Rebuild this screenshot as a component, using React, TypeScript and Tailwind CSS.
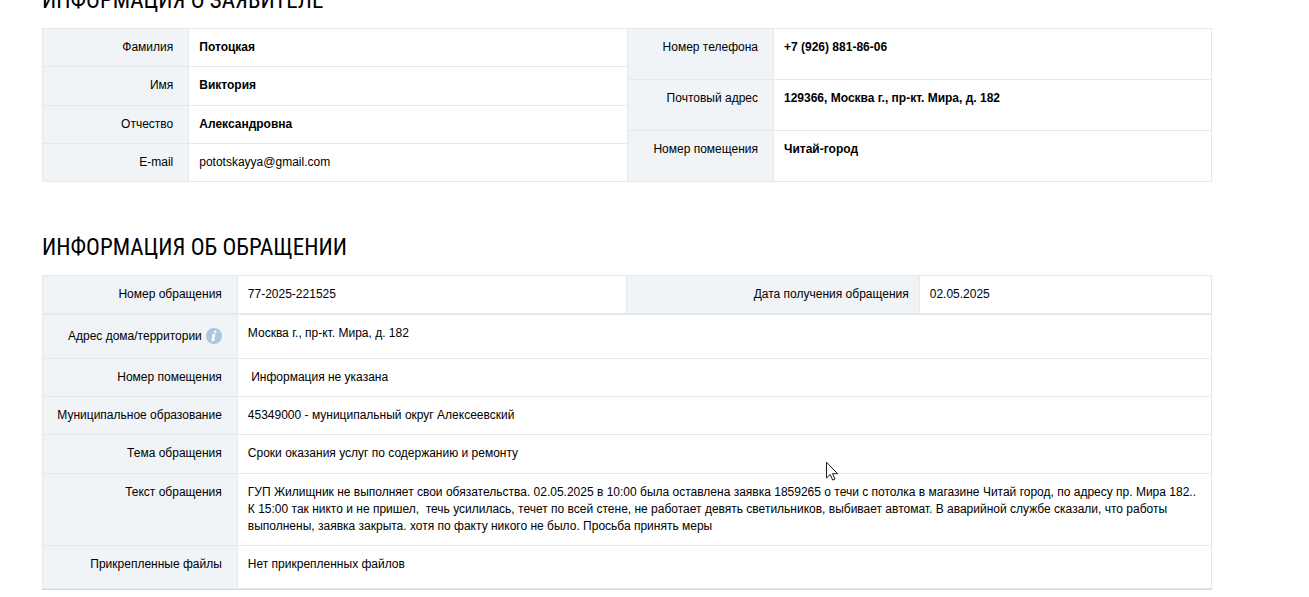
import type { ReactNode } from "react";

type Field = { label: ReactNode; value: ReactNode; strong?: boolean };

const LABEL =
  "border border-[#e3e9ed] bg-[#f0f4f7] py-[10px] pl-[10px] pr-[15px] text-right align-top font-normal";
const VALUE = "border border-[#e3e9ed] px-[10px] py-[10px] text-left align-top";

const nameFields: Field[] = [
  { label: "Фамилия", value: "Потоцкая", strong: true },
  { label: "Имя", value: "Виктория", strong: true },
  { label: "Отчество", value: "Александровна", strong: true },
  { label: "E-mail", value: "pototskayya@gmail.com" },
];

const contactFields: Field[] = [
  { label: "Номер телефона", value: "+7 (926) 881-86-06", strong: true },
  { label: "Почтовый адрес", value: "129366, Москва г., пр-кт. Мира, д. 182", strong: true },
  { label: "Номер помещения", value: "Читай-город", strong: true },
];

function InfoIcon() {
  return (
    <svg viewBox="0 0 16 16" className="size-4" aria-hidden="true">
      <circle cx="8" cy="8" r="8" fill="#a9c7e0" />
      <circle cx="9.2" cy="3.8" r="1.3" fill="#fff" />
      <path
        d="M5.6 6.900C6.800 6.100 8.200 5.800 9.500 5.800L8.100 11.300c-.1.600.3.600 1.300-.2l.3.500c-1.100 1.200-2.300 1.800-3.300 1.700-.8-.1-1.100-.8-.9-1.600l1-3.800c.1-.5-.3-.5-.8-.3z"
        fill="#fff"
      />
    </svg>
  );
}

const appealFields: Field[] = [
  {
    label: (
      <span className="mb-px flex h-[22px] items-center justify-end gap-1">
        Адрес дома/территории
        <InfoIcon />
      </span>
    ),
    value: "Москва г., пр-кт. Мира, д. 182",
  },
  { label: "Номер помещения", value: "\u00a0Информация не указана" },
  { label: "Муниципальное образование", value: "45349000 - муниципальный округ Алексеевский" },
  { label: "Тема обращения", value: "Сроки оказания услуг по содержанию и ремонту" },
  {
    label: "Текст обращения",
    value:
      "ГУП Жилищник не выполняет свои обязательства. 02.05.2025 в 10:00 была оставлена заявка 1859265 о течи с потолка в магазине Читай город, по адресу пр. Мира 182.. К 15:00 так никто и не пришел,\u00a0 течь усилилась, течет по всей стене, не работает девять светильников, выбивает автомат. В аварийной службе сказали, что работы выполнены, заявка закрыта. хотя по факту никого не было. Просьба принять меры",
  },
  {
    label: "Прикрепленные файлы",
    value: <span className="block pb-[5px]">Нет прикрепленных файлов</span>,
  },
];

function FieldTable({
  fields,
  labelWidth,
  className,
}: {
  fields: Field[];
  labelWidth: string;
  className: string;
}) {
  return (
    <table className={`w-full table-fixed border-collapse ${className}`}>
      <colgroup>
        <col className={labelWidth} />
        <col />
      </colgroup>
      <tbody>
        {fields.map((field, index) => (
          <tr key={index}>
            <th scope="row" className={LABEL}>
              {field.label}
            </th>
            <td className={`${VALUE} ${field.strong ? "font-bold" : ""}`}>{field.value}</td>
          </tr>
        ))}
      </tbody>
    </table>
  );
}

function Heading({ children }: { children: ReactNode }) {
  return (
    <h2 className="mb-[11px] font-['Roboto_Condensed','Liberation_Sans_Narrow',Roboto,sans-serif] text-[23px] leading-8 whitespace-nowrap uppercase">
      {children}
    </h2>
  );
}

export default function App() {
  return (
    <div className="relative flow-root bg-white font-['Liberation_Sans',Arial,sans-serif] text-[12px] leading-[17px] text-black">
      <main className="-mt-[15px] mr-[97px] ml-[42px]">
        <section>
          <Heading>Информация о заявителе</Heading>
          <div className="grid grid-cols-2">
            <div className="-mr-px">
              <FieldTable fields={nameFields} labelWidth="w-1/4" className="h-[154px]" />
            </div>
            <FieldTable fields={contactFields} labelWidth="w-1/4" className="h-[154px]" />
          </div>
        </section>

        <section className="mt-[50px]">
          <Heading>Информация об обращении</Heading>
          <table className="w-full table-fixed border-collapse">
            <colgroup>
              <col className="w-1/6" />
              <col className="w-1/3" />
              <col className="w-1/4" />
              <col className="w-1/4" />
            </colgroup>
            <tbody>
              <tr>
                <th scope="row" className={LABEL}>Номер обращения</th>
                <td className={VALUE}>77-2025-221525</td>
                <th scope="row" className={`${LABEL} pr-[10px]!`}>Дата получения обращения</th>
                <td className={VALUE}>02.05.2025</td>
              </tr>
            </tbody>
          </table>
          <div className="border-b border-[#d3d7da]">
            <FieldTable fields={appealFields} labelWidth="w-1/6" className="h-[275px]" />
          </div>
        </section>
      </main>

      <svg
        viewBox="0 0 13 20"
        className="pointer-events-none absolute top-[461px] left-[826px] h-5 w-[13px]"
        aria-hidden="true"
      >
        <path
          d="M.5 1.200V17l3.700-3.500 2.500 5.600 2.300-1-2.500-5.400h5.100z"
          fill="#fff"
          stroke="#1c1c28"
          strokeWidth="1"
        />
      </svg>
    </div>
  );
}
